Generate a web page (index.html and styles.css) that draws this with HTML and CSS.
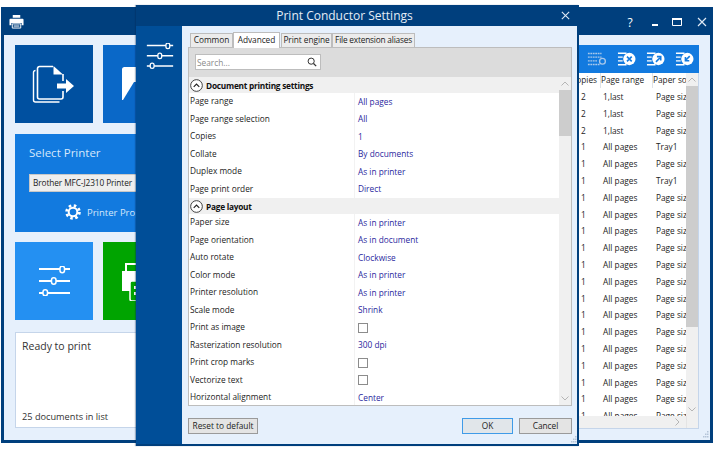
FILE: index.html
```html
<!DOCTYPE html>
<html lang="en">
<head>
<meta charset="utf-8">
<title>Print Conductor Settings</title>
<link rel="stylesheet" href="styles.css">
</head>
<body>
<div class="window main">
  <header class="main-title">
    <svg class="app-icon" viewBox="0 0 16 16"><path d="M4 1h8v3H4zM1.500 5h13a1 1 0 0 1 1 1v6h-2V9.500h-11V12h-2V6a1 1 0 0 1 1-1z" fill="#fff"/><path d="M3.500 10.500h9V15h-9z" fill="none" stroke="#fff"/><path d="M5 12h6M5 13.500h6" stroke="#fff" stroke-width=".7"/></svg>
    <div class="win-controls">
      <span class="help">?</span>
      <svg class="ctl ctl-min" viewBox="0 0 12 12"><path d="M3 8h6v2H3z" fill="#fff"/></svg>
      <svg class="ctl ctl-max" viewBox="0 0 12 12"><path d="M1.500 2.500h9v7h-9z" fill="none" stroke="#fff"/><path d="M1 2h10v2H1z" fill="#fff"/></svg>
      <svg class="ctl ctl-close" viewBox="0 0 12 12"><path d="M2 2l8 8M10 2l-8 8" stroke="#dfe9f5" stroke-width="1.200"/></svg>
    </div>
  </header>
  <div class="main-body">
    <div class="left-col">
      <div class="tile-row">
        <div class="tile tile-add">
          <svg class="tile-icon" viewBox="0 0 44 40"><path d="M3.500 6.500a2 2 0 0 0-2 2V36a2 2 0 0 0 2 2H27.500" fill="none" stroke="#fff" stroke-width="1.400"/><path d="M21 2.500H7.500a2 2 0 0 0-2 2V33a2 2 0 0 0 2 2H29a2 2 0 0 0 2-2v-6M31 17v-7" fill="none" stroke="#fff" stroke-width="1.600"/><path d="M21.500 2l9.500 8.500h-9.500z" fill="#fff"/><path d="M25 19.500h9V15l8 7-8 7v-4.500h-9z" fill="#fff"/></svg>
        </div>
        <div class="tile tile-folder">
          <svg class="tile-icon" viewBox="0 0 44 40"><path d="M2 5.500A2.500 2.500 0 0 1 4.500 3H44v33H2z" fill="#fff"/><path d="M3 36l11-18h30v18z" fill="#0a68c8"/></svg>
        </div>
      </div>
      <section class="printer-panel">
        <h2 class="printer-head">Select Printer</h2>
        <div class="printer-combo">Brother MFC-J2310 Printer</div>
        <div class="printer-props">
          <svg class="gear" viewBox="0 0 16 16"><circle cx="8" cy="8" r="4.300" fill="none" stroke="#fff" stroke-width="2"/><circle cx="8" cy="8" r="6.400" fill="none" stroke="#fff" stroke-width="2.800" stroke-dasharray="2.500 2.530"/></svg>
          <span>Printer Properties</span>
        </div>
      </section>
      <div class="tile-row">
        <div class="tile tile-settings">
          <svg class="tile-icon sliders" viewBox="0 0 33 30"><path d="M1 3h31M1 15h31M1 27h31" stroke="#fff" stroke-width="2" fill="none"/><g stroke="#fff" stroke-width="1.500" fill="#2490f2"><rect x="22" y=".2" width="4.500" height="6.500" rx="2.200"/><rect x="13.500" y="11.800" width="4.500" height="6.500" rx="2.200"/><rect x="5" y="23.800" width="4.500" height="6" rx="2.200"/></g></svg>
        </div>
        <div class="tile tile-print">
          <svg class="tile-icon" viewBox="0 0 44 40"><path d="M6 11V3h20v8" fill="none" stroke="#fff" stroke-width="2"/><path d="M2 10h34v20H2z" fill="#fff"/><rect x="10" y="20" width="24" height="20" rx="2" fill="#00a400" stroke="#fff" stroke-width="1.500"/><path d="M14 25h3v3h-3zM14 31h3v3h-3z" fill="#fff"/></svg>
        </div>
      </div>
      <section class="status-box">
        <p class="status-main">Ready to print</p>
        <p class="status-count">25 documents in list</p>
      </section>
    </div>
    <section class="doc-panel">
      <div class="doc-toolbar">
        <svg class="tool dim" viewBox="0 0 22 16"><path d="M1 2h15M1 6h15M1 10h10M1 14h13" stroke="#a9c8ea" stroke-width="1.500" stroke-dasharray="2 .7"/><circle cx="17" cy="10.500" r="3.200" fill="none" stroke="#a9c8ea" stroke-width="1.500"/></svg>
        <svg class="tool" viewBox="0 0 20 16"><path d="M1 2h9M1 6h5M1 10h5M1 14h9" stroke="#fff" stroke-width="1.500"/><circle cx="13" cy="8" r="6.500" fill="#fff"/><path d="M10.500 5.500l5 5M15.500 5.500l-5 5" stroke="#127adf" stroke-width="1.700"/></svg>
        <svg class="tool" viewBox="0 0 20 16"><path d="M1 2h9M1 6h5M1 10h5M1 14h9" stroke="#fff" stroke-width="1.500"/><circle cx="13" cy="8" r="6.500" fill="#fff"/><path d="M10.500 11l4-4M11.500 5.500h4v4" stroke="#127adf" stroke-width="1.700" fill="none"/></svg>
        <svg class="tool" viewBox="0 0 20 16"><path d="M1 2h9M1 6h5M1 10h5M1 14h9" stroke="#fff" stroke-width="1.500"/><circle cx="13" cy="8" r="6.500" fill="#fff"/><path d="M15.500 5l-4 4M11 5.800v4h4" stroke="#127adf" stroke-width="1.700" fill="none"/></svg>
      </div>
      <div class="doc-list">
        <div class="doc-scroll-area">
          <div class="doc-rows">
            <div class="doc-head"><span class="h-name">File name</span><span class="h-copies">Copies</span><span class="h-range">Page range</span><span class="h-source">Paper source</span></div>
            <div class="doc-row"><span class="c-name"></span><span class="c-copies">2</span><span class="c-range">1,last</span><span class="c-source">Page size</span></div>
            <div class="doc-row"><span class="c-name"></span><span class="c-copies">2</span><span class="c-range">1,last</span><span class="c-source">Page size</span></div>
            <div class="doc-row"><span class="c-name"></span><span class="c-copies">2</span><span class="c-range">1,last</span><span class="c-source">Page size</span></div>
            <div class="doc-row"><span class="c-name"></span><span class="c-copies">1</span><span class="c-range">All pages</span><span class="c-source">Tray1</span></div>
            <div class="doc-row"><span class="c-name"></span><span class="c-copies">1</span><span class="c-range">All pages</span><span class="c-source">Page size</span></div>
            <div class="doc-row"><span class="c-name"></span><span class="c-copies">1</span><span class="c-range">All pages</span><span class="c-source">Tray1</span></div>
            <div class="doc-row"><span class="c-name"></span><span class="c-copies">1</span><span class="c-range">All pages</span><span class="c-source">Page size</span></div>
            <div class="doc-row"><span class="c-name"></span><span class="c-copies">1</span><span class="c-range">All pages</span><span class="c-source">Page size</span></div>
            <div class="doc-row"><span class="c-name"></span><span class="c-copies">1</span><span class="c-range">All pages</span><span class="c-source">Page size</span></div>
            <div class="doc-row"><span class="c-name"></span><span class="c-copies">1</span><span class="c-range">All pages</span><span class="c-source">Page size</span></div>
            <div class="doc-row"><span class="c-name"></span><span class="c-copies">1</span><span class="c-range">All pages</span><span class="c-source">Page size</span></div>
            <div class="doc-row"><span class="c-name"></span><span class="c-copies">1</span><span class="c-range">All pages</span><span class="c-source">Page size</span></div>
            <div class="doc-row"><span class="c-name"></span><span class="c-copies">1</span><span class="c-range">All pages</span><span class="c-source">Page size</span></div>
            <div class="doc-row"><span class="c-name"></span><span class="c-copies">1</span><span class="c-range">All pages</span><span class="c-source">Page size</span></div>
            <div class="doc-row"><span class="c-name"></span><span class="c-copies">1</span><span class="c-range">All pages</span><span class="c-source">Page size</span></div>
            <div class="doc-row"><span class="c-name"></span><span class="c-copies">1</span><span class="c-range">All pages</span><span class="c-source">Page size</span></div>
            <div class="doc-row"><span class="c-name"></span><span class="c-copies">1</span><span class="c-range">All pages</span><span class="c-source">Page size</span></div>
            <div class="doc-row"><span class="c-name"></span><span class="c-copies">1</span><span class="c-range">All pages</span><span class="c-source">Page size</span></div>
            <div class="doc-row"><span class="c-name"></span><span class="c-copies">1</span><span class="c-range">All pages</span><span class="c-source">Page size</span></div>
            <div class="doc-row"><span class="c-name"></span><span class="c-copies">1</span><span class="c-range">All pages</span><span class="c-source">Page size</span></div>
          </div>
          <div class="vscroll doc-vscroll">
            <svg class="arrow" viewBox="0 0 8 5"><path d="M.5 4.500L4 1l3.500 3.500" fill="none" stroke="#b5b5b5"/></svg>
            <div class="thumb doc-thumb"></div>
            <svg class="arrow arrow-end" viewBox="0 0 8 5"><path d="M.5.500L4 4 7.500.500" fill="none" stroke="#b5b5b5"/></svg>
          </div>
        </div>
        <div class="hscroll">
          <svg class="harrow" viewBox="0 0 5 8"><path d="M.5.500L4 4 .5 7.500" fill="none" stroke="#b5b5b5"/></svg>
          <span class="corner"></span>
        </div>
      </div>
    </section>
  </div>
  <svg class="grip grip-main" viewBox="0 0 8 8"><path d="M6 0h1.500v1.500H6zM4 2.500h1.500V4H4zM6 2.500h1.500V4H6zM2 5h1.500v1.500H2zM4 5h1.500v1.500H4zM6 5h1.500v1.500H6z" fill="#b4c4d8"/></svg>
</div>

<div class="window dialog">
  <header class="dlg-title">
    <h1 class="dlg-heading">Print Conductor Settings</h1>
    <svg class="dlg-close" viewBox="0 0 12 12"><path d="M2 2l8 8M10 2l-8 8" stroke="#dfe9f5" stroke-width="1.200"/></svg>
  </header>
  <div class="dlg-body">
    <aside class="dlg-side">
      <svg class="side-icon" viewBox="0 0 33 30"><path d="M1 3h31M1 15h31M1 27h31" stroke="#fff" stroke-width="1.800" fill="none"/><g stroke="#fff" stroke-width="1.500" fill="#004e98"><rect x="23.500" y=".2" width="4.500" height="6.500" rx="2.200"/><rect x="14" y="11.800" width="4.500" height="6.500" rx="2.200"/><rect x="5" y="23.800" width="4.500" height="6" rx="2.200"/></g></svg>
    </aside>
    <div class="dlg-main">
      <nav class="tabs">
        <span class="tab tab-common">Common</span>
        <span class="tab tab-active">Advanced</span>
        <span class="tab tab-engine">Print engine</span>
        <span class="tab tab-alias">File extension aliases</span>
      </nav>
      <section class="tab-panel">
        <div class="search-bar">
          <div class="search-box">
            <span class="search-hint">Search...</span>
            <svg class="search-icon" viewBox="0 0 12 12"><circle cx="5" cy="5" r="3.700" fill="none" stroke="#333" stroke-width="1.200"/><path d="M7.800 7.800L11 11" stroke="#333" stroke-width="1.500"/></svg>
          </div>
        </div>
        <div class="props">
          <div class="prop-list">
            <div class="group"><svg class="collapse" viewBox="0 0 14 14"><circle cx="7" cy="7" r="6.300" fill="#fff" stroke="#333"/><path d="M4 8.500L7 5.500l3 3" fill="none" stroke="#222" stroke-width="1.300"/></svg><span>Document printing settings</span></div>
            <div class="prop"><span class="k">Page range</span><span class="v">All pages</span></div>
            <div class="prop"><span class="k">Page range selection</span><span class="v">All</span></div>
            <div class="prop"><span class="k">Copies</span><span class="v">1</span></div>
            <div class="prop"><span class="k">Collate</span><span class="v">By documents</span></div>
            <div class="prop"><span class="k">Duplex mode</span><span class="v">As in printer</span></div>
            <div class="prop"><span class="k">Page print order</span><span class="v">Direct</span></div>
            <div class="group"><svg class="collapse" viewBox="0 0 14 14"><circle cx="7" cy="7" r="6.300" fill="#fff" stroke="#333"/><path d="M4 8.500L7 5.500l3 3" fill="none" stroke="#222" stroke-width="1.300"/></svg><span>Page layout</span></div>
            <div class="prop"><span class="k">Paper size</span><span class="v">As in printer</span></div>
            <div class="prop"><span class="k">Page orientation</span><span class="v">As in document</span></div>
            <div class="prop"><span class="k">Auto rotate</span><span class="v">Clockwise</span></div>
            <div class="prop"><span class="k">Color mode</span><span class="v">As in printer</span></div>
            <div class="prop"><span class="k">Printer resolution</span><span class="v">As in printer</span></div>
            <div class="prop"><span class="k">Scale mode</span><span class="v">Shrink</span></div>
            <div class="prop"><span class="k">Print as image</span><span class="v"><i class="check"></i></span></div>
            <div class="prop"><span class="k">Rasterization resolution</span><span class="v">300 dpi</span></div>
            <div class="prop"><span class="k">Print crop marks</span><span class="v"><i class="check"></i></span></div>
            <div class="prop"><span class="k">Vectorize text</span><span class="v"><i class="check"></i></span></div>
            <div class="prop"><span class="k">Horizontal alignment</span><span class="v">Center</span></div>
          </div>
          <div class="vscroll prop-vscroll">
            <svg class="arrow" viewBox="0 0 8 5"><path d="M.5 4.500L4 1l3.500 3.500" fill="none" stroke="#b5b5b5"/></svg>
            <div class="thumb prop-thumb"></div>
            <svg class="arrow arrow-end" viewBox="0 0 8 5"><path d="M.5.500L4 4 7.500.500" fill="none" stroke="#b5b5b5"/></svg>
          </div>
        </div>
      </section>
      <footer class="dlg-footer">
        <button class="btn btn-reset" type="button">Reset to default</button>
        <button class="btn btn-ok" type="button">OK</button>
        <button class="btn btn-cancel" type="button">Cancel</button>
      </footer>
    </div>
  </div>
  <svg class="grip grip-dlg" viewBox="0 0 8 8"><path d="M6 0h1.500v1.500H6zM4 2.500h1.500V4H4zM6 2.500h1.500V4H6zM2 5h1.500v1.500H2zM4 5h1.500v1.500H4zM6 5h1.500v1.500H6z" fill="#b4c4d8"/></svg>
</div>
</body>
</html>
```
FILE: styles.css
```css
* { box-sizing: border-box; }
html, body { margin: 0; padding: 0; }
body {
  width: 714px; height: 450px; overflow: hidden; background: #fff;
  font-family: "Open Sans", "Noto Sans", sans-serif; font-size: 8.300px; color: #222;
}
h1, h2, p { margin: 0; font-weight: 400; }
svg { display: block; flex: none; }

.window { position: absolute; background: #e6f0fc; }

/* Main window */
.main { left: 1px; top: 7px; width: 712px; height: 436px; border: 3px solid #003f7d; border-top-width: 1px; display: flex; flex-direction: column; }
.main-title { height: 27px; flex: none; background: #003f7d; display: flex; align-items: center; padding: 0 2px 0 5px; }
.app-icon { width: 15px; height: 15px; }
.win-controls { margin-left: auto; display: flex; align-items: center; }
.help { width: 12px; color: #fff; font-size: 12px; line-height: 14px; text-align: center; margin-top: 2px; }
.ctl { width: 12px; height: 12px; margin-top: 1px; }
.ctl-min { margin-left: 13px; }
.ctl-max { margin-left: 10px; }
.ctl-close { margin-left: 13px; }
.main-body { flex: 1; min-height: 0; display: flex; justify-content: space-between; padding: 10px 11px 11px; }
.left-col { width: 166px; display: flex; flex-direction: column; }
.tile-row { display: flex; gap: 10px; }
.tile { width: 78px; height: 78px; display: flex; align-items: center; justify-content: center; }
.tile-add { background: #0050a0; }
.tile-folder { background: #0a68c8; }
.tile-settings { background: #2490f2; }
.tile-print { background: #00a400; }
.tile-icon { width: 44px; height: 40px; }
.sliders { width: 33px; height: 30px; }
.tile-settings, .tile-print { margin-top: 10px; }
.printer-panel { margin-top: 11px; height: 98px; background: #127adf; padding: 11px 14px 0; display: flex; flex-direction: column; }
.printer-head { font-size: 11.500px; line-height: 15px; color: #d6e8fb; }
.printer-combo { margin-top: 14px; height: 18px; line-height: 16px; background: #eee; border: 1px solid #c8c8c8; padding-left: 3px; font-size: 8.300px; letter-spacing: -.1px; color: #222; width: 124px; white-space: nowrap; }
.printer-props { margin-top: 12px; margin-left: 36px; display: flex; align-items: center; gap: 6px; color: #d6e8fb; font-size: 9.500px; white-space: nowrap; }
.gear { width: 16px; height: 16px; }
.status-box { margin-top: 12px; height: 96px; background: #fff; border: 1px solid #c5d5ea; padding: 6px 6px 4px; display: flex; flex-direction: column; justify-content: space-between; }
.status-main { font-size: 10.500px; line-height: 14px; color: #333; }
.status-count { font-size: 9.200px; line-height: 13px; color: #333; }

.doc-panel { width: 508px; display: flex; flex-direction: column; }
.doc-toolbar { height: 28px; flex: none; background: #127adf; display: flex; align-items: center; justify-content: flex-end; gap: 10px; padding-right: 5px; }
.tool { width: 19px; height: 16px; }
.tool.dim { width: 20px; }
.doc-list { flex: 1; min-height: 0; background: #fff; border: 1px solid #c5d5ea; border-top: 0; display: flex; flex-direction: column; }
.doc-scroll-area { flex: 1; min-height: 0; display: flex; overflow: hidden; }
.doc-rows { flex: 1; min-width: 0; overflow: hidden; }
.doc-head { height: 15px; display: flex; align-items: center; background: #fff; white-space: nowrap; }
.doc-head span { display: block; height: 15px; line-height: 14px; border-right: 1px solid #dfe3e8; overflow: hidden; }
.doc-head .h-copies { padding-left: 6px; }
.h-name, .c-name { width: 373px; flex: none; }
.h-copies, .c-copies { width: 36px; flex: none; }
.h-range, .c-range { width: 52px; flex: none; }
.h-source, .c-source { width: 33px; flex: none; }
.doc-head .h-source { border-right: 0; }
.doc-row { height: 16.800px; line-height: 15px; display: flex; white-space: nowrap; }
.doc-head + .doc-row { margin-top: 1px; }
.c-copies { padding-left: 16px; }
.c-range { padding-left: 2px; }
.c-source { padding-left: 3px; overflow: hidden; }
.vscroll { width: 12px; flex: none; background: #f0f0f0; display: flex; flex-direction: column; align-items: center; }
.arrow { width: 8px; height: 5px; margin-top: 4px; }
.arrow-end { margin-top: auto; margin-bottom: 4px; }
.thumb { width: 12px; background: #cdcdcd; }
.doc-thumb { height: 241px; margin-top: 4px; }
.prop-thumb { height: 46px; margin-top: 4px; }
.hscroll { height: 12px; flex: none; background: #f0f0f0; display: flex; align-items: center; justify-content: flex-end; }
.harrow { width: 5px; height: 8px; margin-right: 6px; }
.corner { width: 12px; height: 12px; background: #f0f0f0; border-left: 1px solid #e4e4e4; }
.grip { position: absolute; width: 8px; height: 8px; }
.grip-main { right: 1px; bottom: 1px; }
.grip-dlg { right: 0; bottom: 0; }

/* Dialog */
.dialog { left: 136px; top: 5px; width: 443px; height: 441px; border-right: 2px solid #003f7d; border-bottom: 2px solid #003f7d; display: flex; flex-direction: column; box-shadow: -1px 0 1px rgba(0,40,90,.35); }
.dlg-title { height: 21px; flex: none; background: #003f7d; display: flex; align-items: center; justify-content: center; padding-right: 24px; position: relative; }
.dlg-heading { color: #e4edf7; font-size: 12px; }
.dlg-close { position: absolute; right: 6px; top: 5px; width: 11px; height: 11px; }
.dlg-body { flex: 1; min-height: 0; display: flex; }
.dlg-side { width: 46px; flex: none; background: #004e98; padding: 17px 0 0 10px; }
.side-icon { width: 28px; height: 25.500px; }
.dlg-main { flex: 1; min-width: 0; padding: 5px 5px 0 6px; display: flex; flex-direction: column; }
.tabs { height: 16px; flex: none; display: flex; align-items: flex-end; padding-left: 2px; position: relative; z-index: 1; font-size: 8.300px; letter-spacing: -.05px; }
.tab { display: block; height: 14px; line-height: 12px; text-align: center; background: #ececec; border: 1px solid #bdbdbd; border-bottom: 0; white-space: nowrap; }
.tab-common { width: 43px; }
.tab-active { width: 47px; height: 16px; line-height: 13px; background: #fff; margin-bottom: -1px; }
.tab-engine { width: 51px; margin-left: 1px; }
.tab-alias { width: 83px; letter-spacing: -.2px; }
.tab-panel { height: 359px; flex: none; border: 1px solid #bdbdbd; background: #fff; display: flex; flex-direction: column; }
.search-bar { height: 29px; flex: none; background: #dcdcdc; padding: 6px 0 0 6px; }
.search-box { width: 126px; height: 16px; background: #fff; border: 1px solid #bdbdbd; display: flex; align-items: center; justify-content: space-between; padding: 0 3px 0 1px; }
.search-hint { color: #8a8a8a; }
.search-icon { width: 10px; height: 10px; }
.props { flex: 1; min-height: 0; display: flex; overflow: hidden; }
.prop-list { flex: 1; min-width: 0; }
.group { height: 16px; display: flex; align-items: center; gap: 3px; background: #f0f0f0; font-weight: 700; font-size: 8.300px; letter-spacing: -.25px; padding-left: 1px; color: #111; }
.collapse { width: 13px; height: 13px; }
.prop { height: 17.500px; line-height: 16px; display: flex; white-space: nowrap; }
.k { width: 166px; flex: none; padding-left: 1px; border-right: 1px solid #f2f2f2; }
.v { padding-left: 3px; color: #2a1f9e; display: flex; align-items: center; }
.check { display: block; width: 10px; height: 10px; background: #fff; border: 1px solid #8c8c8c; }
.dlg-footer { flex: 1; display: flex; align-items: flex-start; padding-top: 12px; }
.btn { height: 16px; padding: 0; font: inherit; line-height: 14px; color: #222; background: #e4e4e4; border: 1px solid #9a9a9a; }
.btn-reset { width: 70px; }
.btn-ok { width: 51px; margin-left: auto; border-color: #3f9be8; background: #e1e6ea; }
.btn-cancel { width: 53px; margin-left: 6px; }
```
